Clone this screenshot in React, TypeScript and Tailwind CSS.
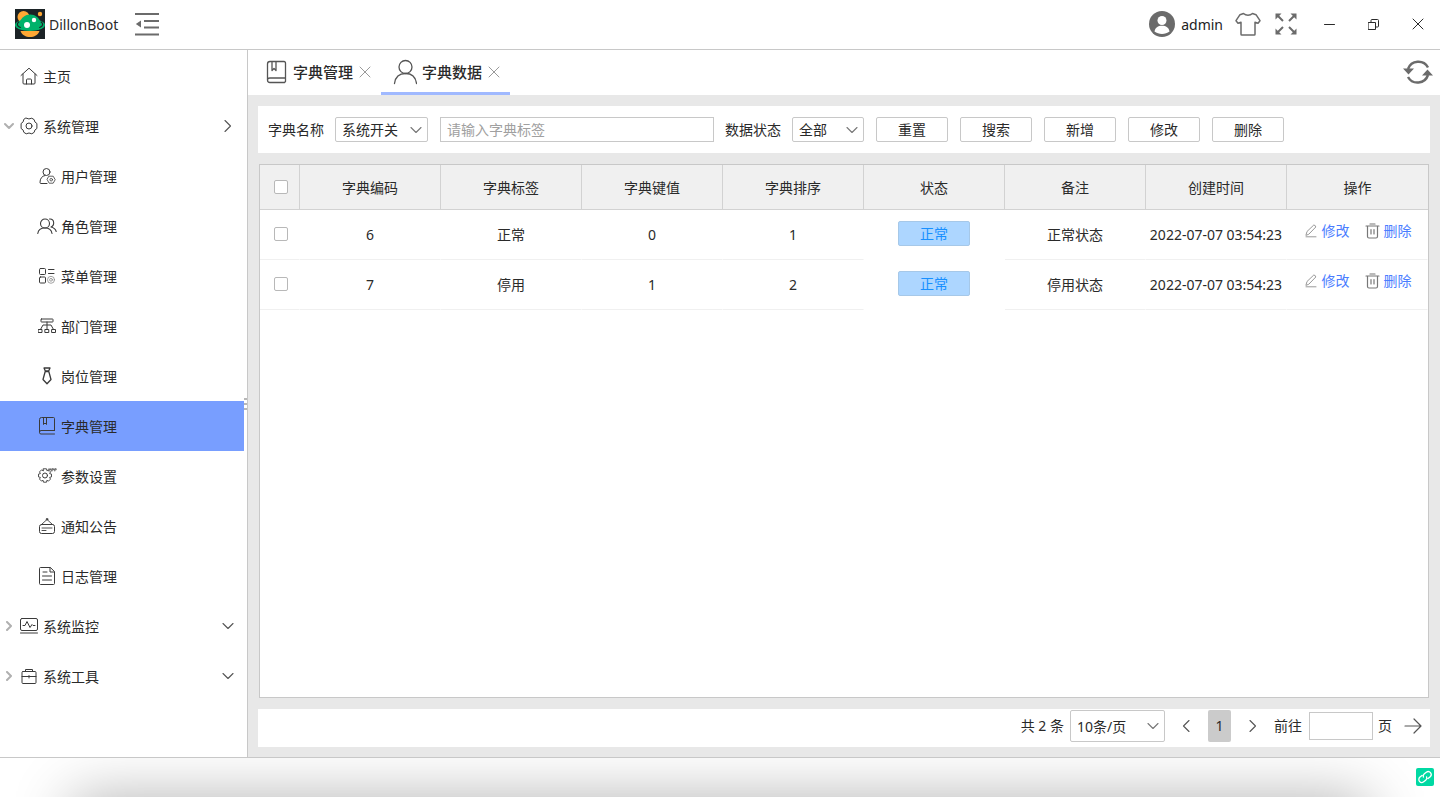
import { type ReactNode, useState } from "react";

type SvgProps = {
  w: number;
  h: number;
  stroke?: number;
  className?: string;
  children: ReactNode;
};

const Svg = ({ w, h, stroke = 1, className = "", children }: SvgProps) => (
  <svg
    width={w}
    height={h}
    viewBox={`0 0 ${w} ${h}`}
    fill="none"
    stroke="currentColor"
    strokeWidth={stroke}
    strokeLinecap="round"
    strokeLinejoin="round"
    className={`shrink-0 ${className}`}
    aria-hidden="true"
  >
    {children}
  </svg>
);

const Logo = () => (
  <Svg w={30} h={30} stroke={0}>
    <path d="M0 0h30v30H0z" fill="#1c2326" />
    <circle cx="8.500" cy="8" r="6" fill="#ffa834" />
    <circle cx="25" cy="5" r="2.200" fill="#ffa834" />
    <path d="M5.500 22h19c-1.500 4-5.300 6-9.500 6s-8-2-9.500-6z" fill="#ffa834" />
    <ellipse cx="15" cy="16" rx="15" ry="6" fill="#00b26a" />
    <path d="M4.500 13.500c1.800-5 5.800-8 10.700-8s9 3 10.500 8l-2 7.500h-17z" fill="#00b26a" />
    <path
      d="M3.800 13c-2.300 1.700-2 4 1.500 5.500M26.200 13c2.300 1.700 2 4-1.500 5.500"
      stroke="#1c2326"
      strokeWidth="1.200"
    />
    <circle cx="12" cy="16" r="3" fill="#fff" />
    <circle cx="19" cy="11" r="2.200" fill="#fff" />
  </Svg>
);

const FoldIcon = () => (
  <Svg w={24} h={24} stroke={2}>
    <path d="M0 2h24M9 9h15M9 15.500h15M0 22.500h24" strokeLinecap="butt" />
    <path d="M6 8.500v7L.8 12z" fill="currentColor" stroke="none" />
  </Svg>
);

const AvatarIcon = () => (
  <Svg w={26} h={26} stroke={0}>
    <circle cx="13" cy="13" r="13" fill="#6b6b6b" />
    <circle cx="13" cy="9.500" r="4.500" fill="#fff" />
    <path d="M5.500 20.500c.5-4 3.500-5.800 7.500-5.800s7 1.800 7.500 5.800c-4 3.300-11 3.300-15 0z" fill="#fff" />
  </Svg>
);

const ShirtIcon = () => (
  <Svg w={26} h={24} stroke={1.5}>
    <path d="M8.500 1.500c2.500 2.200 6.500 2.200 9 0l3.500 1.200 4 6-2 2.500-3-1v12q0 .8-.8.8H6.800q-.8 0-.8-.8v-12l-3 1-2-2.500 4-6z" />
  </Svg>
);

const ExpandIcon = () => (
  <Svg w={22} h={22} stroke={2}>
    <path d="M3 3l5 5M19 3l-5 5M3 19l5-5M19 19l-5-5" strokeLinecap="butt" />
    <path
      d="M.5.5h6l-6 6zM21.500.5v6l-6-6zM.5 21.500v-6l6 6zM21.500 21.500h-6l6-6z"
      fill="currentColor"
      stroke="none"
    />
  </Svg>
);

const RefreshIcon = () => (
  <Svg w={30} h={26} stroke={2.5}>
    <path d="M5 10A11 11 0 0 1 25 8.500M25 16A11 11 0 0 1 5 18" strokeLinecap="butt" />
    <path d="M0 9.500h11l-5.500 6zM19 16.500h11l-5.500-6z" fill="currentColor" stroke="none" />
  </Svg>
);

const chevronPaths = {
  left: "M9 1.500L3.500 7 9 12.500",
  right: "M4 1.500L9.500 7 4 12.500",
  down: "M2 4.500L7 9.500 12 4.500",
};

const Chevron = ({ dir, className = "" }: { dir: keyof typeof chevronPaths; className?: string }) => (
  <Svg w={14} h={14} stroke={1.1} className={className}>
    <path d={chevronPaths[dir]} />
  </Svg>
);

const CloseIcon = ({ size }: { size: number }) => (
  <Svg w={size} h={size}>
    <path d={`M1 1L${size - 1} ${size - 1}M${size - 1} 1L1 ${size - 1}`} />
  </Svg>
);

const HomeIcon = () => (
  <Svg w={18} h={18}>
    <path d="M1 8.500L9 1.200l8 7.300M3 7v9q0 1 1 1h10q1 0 1-1V7M6.500 17v-4q0-1 1-1h3q1 0 1 1v4" />
  </Svg>
);

const GearIcon = () => (
  <Svg w={18} h={18}>
    <path d="M6.200 1.200Q9 2.800 11.800 1.200L14.200 2.700Q14.200 5.300 16.900 6.500V11.500Q14.200 12.700 14.200 15.300L11.800 16.800Q9 15.200 6.200 16.800L3.800 15.300Q3.800 12.700 1.100 11.500V6.500Q3.800 5.300 3.800 2.700z" />
    <circle cx="9" cy="9" r="3" />
  </Svg>
);

const UserGearIcon = () => (
  <Svg w={18} h={18}>
    <circle cx="8.500" cy="5" r="3.500" />
    <path d="M9 16.500H3q-1 0-1-1c0-4 2-6.500 5-7" />
    <path d="M11.200 9.200h4l2 3.500-2 3.500h-4l-2-3.500z" strokeWidth=".8" />
    <circle cx="13.200" cy="12.700" r="1.300" strokeWidth=".8" />
  </Svg>
);

const UsersIcon = () => (
  <Svg w={20} h={18} stroke={1.1}>
    <circle cx="8" cy="6.500" r="4.500" />
    <path d="M.8 16.500c.4-3.200 3-5.500 7.200-5.500s6.500 2.300 7 5.500M12.500 2c5-.5 5.500 6.500 1.500 8 2.500.5 4.300 1.500 5.200 4.500" />
  </Svg>
);

const MenuGearIcon = () => (
  <Svg w={18} h={18}>
    <rect x="1.500" y="1.500" width="6" height="6" rx="1" />
    <rect x="1.500" y="10" width="6" height="6" rx="1" />
    <path d="M10.500 2.500h5.500M10.500 6.500h5.500" />
    <g stroke="#8a8a8a" strokeWidth=".8">
      <circle cx="13" cy="12.800" r="3.500" />
      <circle cx="13" cy="12.800" r="1.400" />
    </g>
  </Svg>
);

const OrgIcon = () => (
  <Svg w={18} h={18}>
    <rect x="3" y="2" width="12" height="3" rx=".5" />
    <rect x=".5" y="12.500" width="3.500" height="3" />
    <rect x="7.250" y="12.500" width="3.500" height="3" />
    <rect x="14" y="12.500" width="3.500" height="3" />
    <path d="M9 5v7.500M2.500 12.500L5 8h8l2.500 4.500" />
  </Svg>
);

const TieIcon = () => (
  <Svg w={18} h={18} stroke={1.3}>
    <path d="M6 1h6l-1.200 2.800H7.200zM7.200 4.500L5 12.500 9 16.800l4-4.300-2.200-8z" />
  </Svg>
);

const BookIcon = () => (
  <Svg w={18} h={20}>
    <path d="M16.500 14.500V2.500q0-1-1-1h-12q-2 0-2 2v13q0 1.500 1.500 1.500h13.500M16.500 14.500H3q-1.500 0-1.500 1.500M5.500 1.500v7L7 7l1.500 1.500v-7" />
  </Svg>
);

const ParamsIcon = () => (
  <Svg w={20} h={18}>
    <path
      d="M6.500 1.800h3l.4 1.900 1.600-.8 2 2-.9 1.700 1.900.5v2.800l-1.900.5.9 1.700-2 2-1.600-.8-.4 1.900h-3l-.4-1.900-1.600.8-2-2 .9-1.700-1.900-.5V7.100l1.900-.5-.9-1.700 2-2 1.600.8z"
      strokeWidth=".9"
    />
    <circle cx="8" cy="8.500" r="2.500" />
    <path
      d="M11.500 4l.6-2.500.9 1.500.8-1.500.4 2.500M15 4V1.700h1.500v1.200H15M17.700 4V1.700h1.500v1.200h-1.500"
      strokeWidth=".7"
    />
  </Svg>
);

const NoticeIcon = () => (
  <Svg w={18} h={18}>
    <path d="M3.500 7.500L9 2.500l5.500 5M4 11h10M4 13.500h4" strokeWidth=".9" />
    <circle cx="9" cy="2.200" r=".8" />
    <rect x="1.500" y="7.500" width="15" height="9" rx="2" />
  </Svg>
);

const LogIcon = () => (
  <Svg w={18} h={20}>
    <path d="M12 1.500H2.500q-1 0-1 1v15q0 1 1 1h13q1 0 1-1V6zM12 1.500V6h4.500M5 6h4M4.500 10h9M4.500 14h9" />
  </Svg>
);

const MonitorIcon = () => (
  <Svg w={20} h={18}>
    <rect x="1.500" y="1.500" width="17" height="12" rx="1.500" />
    <path d="M4 8.500h2l2-4 3 6 2-3 1 1h2M1.500 16h17" />
  </Svg>
);

const ToolboxIcon = () => (
  <Svg w={18} h={18}>
    <rect x="2" y="4.500" width="14" height="12" rx="1" />
    <path d="M5.500 4.500V2.500h7v2M2 9.500h14M9 8.500v2.500" />
  </Svg>
);

const TabBookIcon = () => (
  <Svg w={24} h={24} stroke={1.3}>
    <path d="M21.500 18V3q0-1.500-1.500-1.500H6q-2.500 0-2.500 2.500v16q0 2.500 2.500 2.500h14.500l1-1V18H6q-2.500 0-2.500 2M8 1.500v9l2-2 2 2v-9" />
  </Svg>
);

const TabUserIcon = () => (
  <Svg w={24} h={26} stroke={1.3}>
    <circle cx="12.500" cy="8" r="6.500" />
    <path d="M1.500 24.500c.8-6 4.500-10 11-10s10.200 4 11 10" />
  </Svg>
);

const EditIcon = () => (
  <Svg w={14} h={14}>
    <path d="M2 11l1-3.500L9.800 1q1.800.2 2 2L5 10zM2 12.800h10" />
  </Svg>
);

const TrashIcon = () => (
  <Svg w={15} h={16} stroke={1.2}>
    <path d="M1 3h13M5 1h5M2.500 3v10.500q0 1.500 1.500 1.500h7q1.500 0 1.500-1.500V3M6 6.500V11M9 6.500V11" />
  </Svg>
);

type MenuItem = { label: string; icon: ReactNode; active?: boolean };

const systemItems: MenuItem[] = [
  { label: "用户管理", icon: <UserGearIcon /> },
  { label: "角色管理", icon: <UsersIcon /> },
  { label: "菜单管理", icon: <MenuGearIcon /> },
  { label: "部门管理", icon: <OrgIcon /> },
  { label: "岗位管理", icon: <TieIcon /> },
  { label: "字典管理", icon: <BookIcon />, active: true },
  { label: "参数设置", icon: <ParamsIcon /> },
  { label: "通知公告", icon: <NoticeIcon /> },
  { label: "日志管理", icon: <LogIcon /> },
];

const columns = ["字典编码", "字典标签", "字典键值", "字典排序", "状态", "备注", "创建时间", "操作"];

const rows = [
  { code: 6, label: "正常", value: 0, sort: 1, status: "正常", remark: "正常状态", created: "2022-07-07 03:54:23" },
  { code: 7, label: "停用", value: 1, sort: 2, status: "正常", remark: "停用状态", created: "2022-07-07 03:54:23" },
];

const IconSlot = ({ children }: { children: ReactNode }) => (
  <span className="flex w-5 shrink-0 justify-center pb-0.5 text-[#3a3a3a]">{children}</span>
);

type MenuGroupProps = {
  label: string;
  icon: ReactNode;
  open: boolean;
  onToggle: () => void;
};

const MenuGroup = ({ label, icon, open, onToggle }: MenuGroupProps) => (
  <button
    type="button"
    aria-expanded={open}
    onClick={onToggle}
    className="flex h-[50px] w-full items-center pt-0.5 text-left"
  >
    <span className="flex w-[19px] justify-center pb-0.5 text-[#b0b0b0]">
      <Svg w={12} h={10} stroke={2}>
        <path d={open ? "M1 3l4 4 4-4" : "M3 1l4 4-4 4"} />
      </Svg>
    </span>
    <IconSlot>{icon}</IconSlot>
    <span className="ml-1 flex-1">{label}</span>
    <Chevron dir={open ? "right" : "down"} className="mr-[9px] mb-0.5 text-[#555]" />
  </button>
);

const Sidebar = () => {
  const [open, setOpen] = useState({ system: true, monitor: false, tools: false });
  const toggle = (key: keyof typeof open) => setOpen({ ...open, [key]: !open[key] });

  return (
    <aside className="flex shrink-0 border-r border-[#c8c8c8] pt-px">
      <nav className="w-[244px]">
        <a href="#home" className="flex h-[50px] items-center pt-0.5 pl-[19px]">
          <IconSlot>
            <HomeIcon />
          </IconSlot>
          <span className="ml-1">主页</span>
        </a>
        <MenuGroup label="系统管理" icon={<GearIcon />} open={open.system} onToggle={() => toggle("system")} />
        {open.system &&
          systemItems.map((item) => (
            <a
              key={item.label}
              href="#menu"
              className={`flex h-[50px] items-center pt-0.5 pl-[37px] ${item.active ? "bg-[#789eff]" : ""}`}
            >
              <IconSlot>{item.icon}</IconSlot>
              <span className="ml-1">{item.label}</span>
            </a>
          ))}
        <MenuGroup label="系统监控" icon={<MonitorIcon />} open={open.monitor} onToggle={() => toggle("monitor")} />
        <MenuGroup label="系统工具" icon={<ToolboxIcon />} open={open.tools} onToggle={() => toggle("tools")} />
      </nav>
      <div className="flex w-[3px] flex-col items-center justify-center gap-[3px]">
        <span className="h-0.5 w-[3px] bg-[#b8b8b8]" />
        <span className="h-0.5 w-[3px] bg-[#b8b8b8]" />
        <span className="h-0.5 w-[3px] bg-[#b8b8b8]" />
      </div>
    </aside>
  );
};

const Header = () => (
  <header className="flex h-[50px] shrink-0 items-center border-b border-[#c8c8c8] pb-px pl-[15px]">
    <Logo />
    <span className="ml-1 pt-0.5">DillonBoot</span>
    <button type="button" aria-label="折叠菜单" className="ml-[17px] text-[#6b6b6b]">
      <FoldIcon />
    </button>
    <div className="ml-auto flex items-center text-[#6b6b6b]">
      <button type="button" className="flex items-center gap-1.5 text-[#222]">
        <AvatarIcon />
        <span className="pt-0.5">admin</span>
      </button>
      <button type="button" aria-label="主题" className="ml-3">
        <ShirtIcon />
      </button>
      <button type="button" aria-label="全屏" className="mr-[11px] ml-3.5">
        <ExpandIcon />
      </button>
    </div>
    <button type="button" aria-label="最小化" className="flex w-11 justify-center">
      <Svg w={12} h={11}>
        <path d="M.5 5.500h10" />
      </Svg>
    </button>
    <button type="button" aria-label="还原" className="flex w-11 justify-center">
      <Svg w={12} h={11}>
        <path d="M.5 3.500h7v7h-7zM3 3.500v-2q0-1 1-1h5.500q1 0 1 1V7q0 1-1 1h-2" />
      </Svg>
    </button>
    <button type="button" aria-label="关闭" className="flex w-11 justify-center">
      <CloseIcon size={12} />
    </button>
  </header>
);

const Tab = ({ label, icon, active = false }: { label: string; icon: ReactNode; active?: boolean }) => (
  <div className={`flex items-center border-b-3 pt-0.5 pr-2.5 pl-3 ${active ? "border-[#a0b9ff]" : "border-transparent"}`}>
    <button
      type="button"
      role="tab"
      aria-selected={active}
      className="flex items-center gap-[5px] text-[15px] font-medium"
    >
      <span className="flex w-6 justify-center text-[#555]">{icon}</span>
      <span className="pt-0.5">{label}</span>
    </button>
    <button type="button" aria-label={`关闭${label}`} className="ml-1.5 text-[#999]">
      <CloseIcon size={12} />
    </button>
  </div>
);

const Select = ({ label, options, className }: { label: string; options: string[]; className: string }) => (
  <div className={`relative ${className}`}>
    <select
      aria-label={label}
      className="h-full w-full appearance-none rounded-xs border border-[#c8c8c8] bg-white pl-1.5 outline-none"
    >
      {options.map((option) => (
        <option key={option}>{option}</option>
      ))}
    </select>
    <Chevron dir="down" className="pointer-events-none absolute inset-y-0 right-[5px] my-auto text-[#777]" />
  </div>
);

const FilterBar = () => (
  <form className="flex h-[47px] items-center bg-white pl-2.5" onSubmit={(event) => event.preventDefault()}>
    <span>字典名称</span>
    <Select label="字典名称" options={["系统开关"]} className="ml-[11px] h-[25px] w-[93px]" />
    <input
      type="text"
      aria-label="字典标签"
      placeholder="请输入字典标签"
      className="ml-3 h-[25px] w-[274px] border border-[#c8c8c8] px-1.5 outline-none placeholder:text-[#a0a0a0]"
    />
    <span className="ml-[11px]">数据状态</span>
    <Select label="数据状态" options={["全部"]} className="ml-[11px] h-[25px] w-[72px]" />
    <div className="ml-3 flex gap-3">
      {["重置", "搜索", "新增", "修改", "删除"].map((action) => (
        <button key={action} type="button" className="h-[25px] w-[72px] rounded-xs border border-[#c8c8c8]">
          {action}
        </button>
      ))}
    </div>
  </form>
);

const Checkbox = ({ label }: { label: string }) => (
  <input
    type="checkbox"
    aria-label={label}
    className="mx-auto block h-3.5 w-3.5 appearance-none rounded-xs border border-[#b8b8b8] bg-white checked:bg-[#789eff]"
  />
);

const cell = "border-r border-b border-r-transparent border-b-[#f0f0f0] p-0";

const DictTable = () => (
  <div className="mx-px min-h-0 flex-1 border border-[#c8c8c8] bg-white">
    <table className="w-full table-fixed border-separate border-spacing-0 text-center">
      <thead className="bg-[#f0f0f0]">
        <tr className="h-[45px]">
          <th className="w-10 border-r border-b border-[#d2d2d2] p-0 pl-0.5">
            <Checkbox label="全选" />
          </th>
          {columns.map((column) => (
            <th key={column} className="border-r border-b border-[#d2d2d2] p-0 pt-0.5 font-normal last:border-r-0">
              {column}
            </th>
          ))}
        </tr>
      </thead>
      <tbody>
        {rows.map((row) => (
          <tr key={row.code} className="h-[50px]">
            <td className={`${cell} pb-0.5 pl-0.5`}>
              <Checkbox label={`选择 ${row.code}`} />
            </td>
            <td className={cell}>{row.code}</td>
            <td className={cell}>{row.label}</td>
            <td className={cell}>{row.value}</td>
            <td className={cell}>{row.sort}</td>
            <td className="border-r border-transparent p-0 pb-[3px]">
              <span className="mx-auto flex h-[25px] w-[72px] items-center justify-center rounded-xs border border-[#a6c8e8] bg-[#add6ff] text-[#1890ff]">
                {row.status}
              </span>
            </td>
            <td className={cell}>{row.remark}</td>
            <td className={`${cell} whitespace-nowrap`}>{row.created}</td>
            <td className={`${cell} pb-[7px] text-[#4a7dff]`}>
              <div className="flex items-center justify-center gap-[15px] pl-px">
                <button type="button" className="flex items-center gap-1">
                  <span className="text-[#999]">
                    <EditIcon />
                  </span>
                  修改
                </button>
                <button type="button" className="flex items-center gap-1">
                  <span className="text-[#777]">
                    <TrashIcon />
                  </span>
                  删除
                </button>
              </div>
            </td>
          </tr>
        ))}
      </tbody>
    </table>
  </div>
);

const Pagination = () => (
  <div className="flex h-[38px] items-start justify-end bg-white pt-px pr-2 leading-8">
    <span>共 2 条</span>
    <Select label="每页条数" options={["10条/页"]} className="ml-1.5 h-8 w-[95px]" />
    <button type="button" aria-label="上一页" className="flex h-8 w-[43px] items-center justify-center text-[#555]">
      <Chevron dir="left" />
    </button>
    <button type="button" aria-current="page" className="h-8 w-[23px] rounded-xs bg-[#cbcbcb]">
      1
    </button>
    <button type="button" aria-label="下一页" className="flex h-8 w-[43px] items-center justify-center text-[#555]">
      <Chevron dir="right" />
    </button>
    <label htmlFor="page-jump">前往</label>
    <input id="page-jump" type="text" className="mt-0.5 ml-[7px] h-7 w-16 border border-[#c8c8c8] px-1.5 outline-none" />
    <span className="ml-[5px]">页</span>
    <button type="button" aria-label="跳转" className="ml-3 flex h-8 items-center text-[#555]">
      <Svg w={18} h={18} stroke={1.2}>
        <path d="M1 9h16M10 2l7 7-7 7" />
      </Svg>
    </button>
  </div>
);

const Footer = () => (
  <footer className="relative flex h-10 shrink-0 items-center justify-end overflow-hidden border-t border-[#c8c8c8] bg-white pr-1.5 pb-0.5">
    <div className="absolute top-full right-[72px] left-[72px] h-20 shadow-[0_0_60px_rgba(0,0,0,0.3)]" />
    <button type="button" aria-label="链接" className="relative rounded-xs bg-[#00d9a3] text-white">
      <Svg w={18} h={18} stroke={1.3}>
        <g transform="rotate(-38 9 9)">
          <path d="M7.500 6H5a3 3 0 0 0 0 6h2.500a3 3 0 0 0 2.800-2M10.500 12H13a3 3 0 0 0 0-6h-2.500a3 3 0 0 0-2.800 2" />
        </g>
      </Svg>
    </button>
  </footer>
);

export default function App() {
  return (
    <div className="flex h-screen flex-col bg-white font-['Noto_Sans','Noto_Sans_CJK_SC',sans-serif] text-sm text-[#2a2a2a]">
      <Header />
      <div className="flex min-h-0 flex-1">
        <Sidebar />
        <main className="flex min-w-0 flex-1 flex-col bg-[#e8e8e8]">
          <div className="flex h-[45px] shrink-0 bg-white pl-1">
            <div role="tablist" className="flex">
              <Tab label="字典管理" icon={<TabBookIcon />} />
              <Tab label="字典数据" icon={<TabUserIcon />} active />
            </div>
            <button type="button" aria-label="刷新" className="mr-[7px] ml-auto pb-0.5 text-[#6b6b6b]">
              <RefreshIcon />
            </button>
          </div>
          <div className="flex min-h-0 flex-1 flex-col gap-[11px] px-2.5 pt-[11px] pb-2.5">
            <FilterBar />
            <DictTable />
            <Pagination />
          </div>
        </main>
      </div>
      <Footer />
    </div>
  );
}
